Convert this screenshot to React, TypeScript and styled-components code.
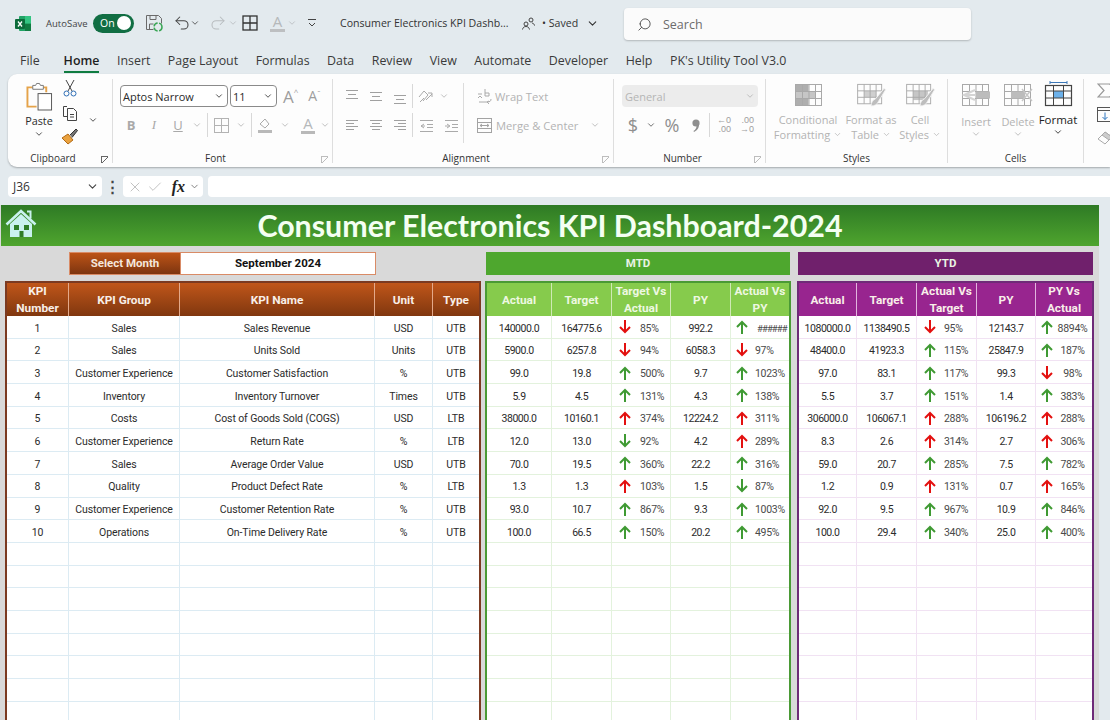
import styled, { createGlobalStyle } from "styled-components";
import { ChevronDown, Check, X, Search, Undo2, Redo2 } from "lucide-react";

type Dir = "ug" | "dr" | "ur" | "dg";
type Col = { w: number; title: string };

const kpiRows = [
  ["1", "Sales", "Sales Revenue", "USD", "UTB"],
  ["2", "Sales", "Units Sold", "Units", "UTB"],
  ["3", "Customer Experience", "Customer Satisfaction", "%", "UTB"],
  ["4", "Inventory", "Inventory Turnover", "Times", "UTB"],
  ["5", "Costs", "Cost of Goods Sold (COGS)", "USD", "LTB"],
  ["6", "Customer Experience", "Return Rate", "%", "LTB"],
  ["7", "Sales", "Average Order Value", "USD", "UTB"],
  ["8", "Quality", "Product Defect Rate", "%", "LTB"],
  ["9", "Customer Experience", "Customer Retention Rate", "%", "UTB"],
  ["10", "Operations", "On-Time Delivery Rate", "%", "UTB"],
];

const mtdRows: [string, string, Dir, string, string, Dir, string][] = [
  ["140000.0", "164775.6", "dr", "85%", "992.2", "ug", "######"],
  ["5900.0", "6257.8", "dr", "94%", "6058.3", "dr", "97%"],
  ["99.0", "19.8", "ug", "500%", "9.7", "ug", "1023%"],
  ["5.9", "4.5", "ug", "131%", "4.3", "ug", "138%"],
  ["38000.0", "10160.1", "ur", "374%", "12224.2", "ur", "311%"],
  ["12.0", "13.0", "dg", "92%", "4.2", "ur", "289%"],
  ["70.0", "19.5", "ug", "360%", "22.2", "ug", "316%"],
  ["1.3", "1.3", "ur", "103%", "1.5", "dg", "87%"],
  ["93.0", "10.7", "ug", "867%", "9.3", "ug", "1003%"],
  ["100.0", "66.5", "ug", "150%", "20.2", "ug", "495%"],
];

const ytdRows: [string, string, Dir, string, string, Dir, string][] = [
  ["1080000.0", "1138490.5", "dr", "95%", "12143.7", "ug", "8894%"],
  ["48400.0", "41923.3", "ug", "115%", "25847.9", "ug", "187%"],
  ["97.0", "83.1", "ug", "117%", "99.3", "dr", "98%"],
  ["5.5", "3.7", "ug", "151%", "1.4", "ug", "383%"],
  ["306000.0", "106067.1", "ur", "288%", "106196.2", "ur", "288%"],
  ["8.3", "2.6", "ur", "314%", "2.7", "ur", "306%"],
  ["59.0", "20.7", "ug", "285%", "7.5", "ug", "782%"],
  ["1.2", "0.9", "ur", "131%", "0.7", "ur", "165%"],
  ["92.0", "9.5", "ug", "967%", "10.9", "ug", "846%"],
  ["100.0", "29.4", "ug", "340%", "25.0", "ug", "400%"],
];

const kpiCols: Col[] = [
  { w: 62, title: "KPI Number" },
  { w: 111, title: "KPI Group" },
  { w: 195, title: "KPI Name" },
  { w: 58, title: "Unit" },
  { w: 46, title: "Type" },
];
const mtdCols: Col[] = [
  { w: 65, title: "Actual" },
  { w: 60, title: "Target" },
  { w: 59, title: "Target Vs Actual" },
  { w: 60, title: "PY" },
  { w: 58, title: "Actual Vs PY" },
];
const ytdCols: Col[] = [
  { w: 58, title: "Actual" },
  { w: 60, title: "Target" },
  { w: 60, title: "Actual Vs Target" },
  { w: 59, title: "PY" },
  { w: 56, title: "PY Vs Actual" },
];

const tabs = ["File", "Home", "Insert", "Page Layout", "Formulas", "Data", "Review", "View", "Automate", "Developer", "Help", "PK's Utility Tool V3.0"];
const TOTAL_ROWS = 18;

const template = (cols: Col[]) => cols.map((c) => `${c.w}px`).join(" ");

const Arrow = ({ dir }: { dir: Dir }) => {
  const color = dir === "ug" || dir === "dg" ? "#3f9a33" : "#e3100f";
  const up = dir === "ug" || dir === "ur";
  return (
    <ArrowSvg viewBox="0 0 12 14" fill="none" stroke={color} strokeWidth="2">
      {up ? <path d="M6 14V2M1 7l5-5 5 5" /> : <path d="M6 0v12M1 7l5 5 5-5" />}
    </ArrowSvg>
  );
};

const Chev = ({ size = 10, color = "#b5b5b5" }: { size?: number; color?: string }) => (
  <ChevronDown size={size} color={color} strokeWidth={2} />
);

// align glyph: rows of short lines
const LinesIcon = ({ rows, color = "#a0a0a0" }: { rows: [number, number, number][]; color?: string }) => (
  <svg width="16" height="16" viewBox="0 0 16 16" stroke={color} strokeWidth="1" fill="none">
    {rows.map(([x1, x2, y]) => (
      <line key={y} x1={x1} x2={x2} y1={y + 0.5} y2={y + 0.5} />
    ))}
  </svg>
);

const CellGrid = ({ stroke = "#a9a9a9" }: { stroke?: string }) => (
  <g stroke={stroke} fill="none" strokeWidth="1">
    <rect x="1.5" y="1.5" width="26" height="21" />
    <path d="M1.5 8.5h26M1.5 15.5h26M8.5 1.5v21M15 1.5v21M21.5 1.5v21" />
  </g>
);

const Brush = () => (
  <path d="M16 25c4 0 7-2 8-5l8-13-2-1-9 11c-3 1-5 4-5 8z" fill="#bdbdbd" stroke="#f4f4f4" strokeWidth="1" />
);

const PctText = ({ value }: { value: string }) =>
  value.startsWith("#") ? <Hash>{value}</Hash> : <span>{value}</span>;

const App = () => (
  <>
    <GlobalStyle />
    <Page>
      <TitleBar>
        <svg width="16" height="15" viewBox="0 0 16 15">
          <rect x="4" y="0" width="12" height="15" rx="1" fill="#21a366" />
          <rect x="10" y="7.5" width="6" height="7.5" fill="#107c41" />
          <rect x="10" y="0" width="6" height="7.5" fill="#33c481" />
          <rect x="0" y="3" width="10" height="10" rx="1" fill="#0c6b3a" />
          <path d="M3 5.5l4 5M7 5.5l-4 5" stroke="#fff" strokeWidth="1.3" />
        </svg>
        <AutoSave>AutoSave</AutoSave>
        <Toggle>
          On
          <Knob />
        </Toggle>
        <svg width="18" height="18" viewBox="0 0 18 18" fill="none" stroke="#6a6a6a">
          <path d="M1.5 1.5h12l3 3v5M1.5 1.5v14h7" />
          <path d="M5 1.5v4h6v-4M4.5 15v-5h4" />
          <circle cx="13" cy="13" r="4" stroke="#3aa655" strokeWidth="1.5" strokeDasharray="5 1.5" />
        </svg>
        <QuickSlot $left={10}>
          <Undo2 size={18} color="#444" strokeWidth={1.4} />
        </QuickSlot>
        <QuickSlot $left={-1}>
          <Chev size={10} color="#444" />
        </QuickSlot>
        <QuickSlot $left={9}>
          <Redo2 size={18} color="#b8bcbf" strokeWidth={1.4} />
        </QuickSlot>
        <QuickSlot $left={1}>
          <Chev size={10} color="#b8bcbf" />
        </QuickSlot>
        <QuickSlot $left={4}>
          <svg width="16" height="16" viewBox="0 0 16 16" fill="none" stroke="#333" strokeWidth="1.3">
            <rect x="1" y="1" width="14" height="14" />
            <path d="M8 1v14M1 8h14" />
          </svg>
        </QuickSlot>
        <DimA $left={12} $bar="#bdbfc1">A</DimA>
        <QuickSlot $left={2}>
          <Chev size={10} color="#b8bcbf" />
        </QuickSlot>
        <QuickSlot $left={10}>
          <svg width="10" height="10" viewBox="0 0 10 10" fill="none" stroke="#444">
            <path d="M1 1.5h8M2 5l3 3 3-3" />
          </svg>
        </QuickSlot>
        <DocTitle>Consumer Electronics KPI Dashb...</DocTitle>
        <svg width="13" height="13" viewBox="0 0 13 13" fill="none" stroke="#444">
          <circle cx="4" cy="7" r="2" />
          <path d="M.5 12.5c.4-2 1.6-3 3.5-3s3 1 3.5 3" />
          <circle cx="9" cy="3" r="2" />
          <path d="M10 6c1.4.3 2.3 1.2 2.6 2.6" />
        </svg>
        <Saved>• Saved</Saved>
        <Chev size={13} color="#333" />
        <SearchBox>
          <FlipIcon>
            <Search size={15} color="#444" strokeWidth={1.4} />
          </FlipIcon>
          Search
        </SearchBox>
      </TitleBar>

      <TabBar>
        {tabs.map((t) => (
          <Tab key={t} $active={t === "Home"}>
            {t}
          </Tab>
        ))}
      </TabBar>

      <Ribbon>
        <Group $w={105}>
          <GroupBody>
            <PasteCol>
              <svg width="27" height="29" viewBox="0 0 28 29" fill="none">
                <path d="M18 5h3v5M11 25H1.5V5H7" stroke="#e5a34a" strokeWidth="2" />
                <path d="M7 7V3h3l1-2h3l1 2h3v4z" stroke="#777" fill="#fff" />
                <rect x="12.5" y="11.5" width="14" height="17" stroke="#555" fill="#fff" />
              </svg>
              <PasteText>Paste</PasteText>
              <Chev size={10} color="#333" />
            </PasteCol>
            <ClipTools>
              <svg width="14" height="17" viewBox="0 0 14 17" fill="none" stroke="#444">
                <path d="M3 0l6 11M11 0L5 11" />
                <circle cx="3.5" cy="13.5" r="2.5" stroke="#2f6fb5" />
                <circle cx="10.5" cy="13.5" r="2.5" stroke="#2f6fb5" />
              </svg>
              <svg width="16" height="17" viewBox="0 0 16 17" fill="none" stroke="#444">
                <path d="M5 2.5H1.5v10H5" />
                <path d="M5.5 4.5h6l3 3v9h-9zM8 10.5h4M8 13h4" />
              </svg>
              <svg width="17" height="17" viewBox="0 0 17 17">
                <path d="M1 10l6-4 5 6-5 4z" fill="#eaa23f" stroke="#b36a14" />
                <path d="M9 7l6-6 1.5 1.5-5.5 7" fill="#777" stroke="#333" />
              </svg>
            </ClipTools>
            <ClipChev>
              <Chev size={10} color="#333" />
            </ClipChev>
          </GroupBody>
          <GroupFoot>
            <GroupLabel>Clipboard</GroupLabel>
            <Launcher $dark />
          </GroupFoot>
        </Group>

        <Group $w={220}>
          <StackBody $left={7}>
            <RibbonRow>
              <Combo $w={108}>
                Aptos Narrow
                <Chev size={10} color="#333" />
              </Combo>
              <Combo $w={47} $gap={2}>
                11
                <Chev size={10} color="#333" />
              </Combo>
              <GrowA $left={6} $size={17}>
                A<sup>^</sup>
              </GrowA>
              <GrowA $left={10} $size={14}>
                A<sup>ˇ</sup>
              </GrowA>
            </RibbonRow>
            <RibbonRow $top={7}>
              <Slot $w={22}>
                <DimLetter $weight={700}>B</DimLetter>
              </Slot>
              <Slot $w={24}>
                <DimLetter $italic>I</DimLetter>
              </Slot>
              <Slot $w={24}>
                <DimLetter $under>U</DimLetter>
              </Slot>
              <Slot $w={14}>
                <Chev />
              </Slot>
              <RowSep $left={3} />
              <Slot $w={26}>
                <svg width="15" height="15" viewBox="0 0 15 15" fill="none" stroke="#b3b3b3">
                  <rect x=".5" y=".5" width="14" height="14" />
                  <path d="M7.5 .5v14M.5 7.5h14" />
                </svg>
              </Slot>
              <Slot $w={14}>
                <Chev />
              </Slot>
              <RowSep $left={3} />
              <Slot $w={26}>
                <svg width="16" height="15" viewBox="0 0 16 15">
                  <path d="M3 6l5-5 4 5-4 4z" fill="none" stroke="#aaa" />
                  <rect x="1" y="12" width="14" height="3" fill="#b9b9b9" />
                </svg>
              </Slot>
              <Slot $w={14}>
                <Chev />
              </Slot>
              <DimA $left={9} $bar="#b9b9b9">A</DimA>
              <Slot $w={14} $left={3}>
                <Chev />
              </Slot>
            </RibbonRow>
          </StackBody>
          <GroupFoot>
            <GroupLabel>Font</GroupLabel>
            <Launcher />
          </GroupFoot>
        </Group>

        <Group $w={281}>
          <SplitBody>
            <StackBlock $left={7}>
              <RibbonRow>
                <Slot $w={24}>
                  <LinesIcon rows={[[2, 14, 2], [4, 12, 6], [2, 14, 10]]} />
                </Slot>
                <Slot $w={24}>
                  <LinesIcon rows={[[2, 14, 4], [4, 12, 8], [2, 14, 12]]} />
                </Slot>
                <Slot $w={24}>
                  <LinesIcon rows={[[2, 14, 7], [4, 12, 11], [2, 14, 15]]} />
                </Slot>
                <RowSep />
                <Slot $w={24}>
                  <svg width="17" height="15" viewBox="0 0 17 15" fill="none" stroke="#aaa">
                    <path d="M2 8l5-6 4 4-5 6M3 13l4-4M9 11l6-6M11 4h4v4" />
                  </svg>
                </Slot>
                <Slot $w={14}>
                  <Chev />
                </Slot>
              </RibbonRow>
              <RibbonRow $top={7}>
                <Slot $w={24}>
                  <LinesIcon rows={[[2, 14, 3], [2, 10, 6], [2, 14, 9], [2, 10, 12]]} />
                </Slot>
                <Slot $w={24}>
                  <LinesIcon rows={[[2, 14, 3], [4, 12, 6], [2, 14, 9], [4, 12, 12]]} />
                </Slot>
                <Slot $w={24}>
                  <LinesIcon rows={[[2, 14, 3], [6, 14, 6], [2, 14, 9], [6, 14, 12]]} />
                </Slot>
                <RowSep />
                <Slot $w={26}>
                  <svg width="15" height="15" viewBox="0 0 15 15" fill="none" stroke="#aaa">
                    <path d="M1 2.5h13M8 6.5h6M8 9.5h6M1 13.5h13M5 6L2 8l3 2M2 8h4" />
                  </svg>
                </Slot>
                <Slot $w={24}>
                  <svg width="15" height="15" viewBox="0 0 15 15" fill="none" stroke="#aaa">
                    <path d="M1 2.5h13M8 6.5h6M8 9.5h6M1 13.5h13M3 6l3 2-3 2M1 8h4" />
                  </svg>
                </Slot>
              </RibbonRow>
            </StackBlock>
            <LongSep />
            <StackBlock $left={13}>
              <RibbonRow>
                <svg width="16" height="16" viewBox="0 0 16 16" fill="none" stroke="#aaa">
                  <path d="M1 6h4M1 10l2-2 2 2M8 1v7M8 5h4v3H8M2 14h8c3 0 4-1 4-3M12 13l-2 1 2 2" />
                </svg>
                <DimText $left={2}>Wrap Text</DimText>
              </RibbonRow>
              <RibbonRow $top={7}>
                <svg width="15" height="15" viewBox="0 0 15 15" fill="none" stroke="#a3a3a3">
                  <rect x=".5" y=".5" width="14" height="14" />
                  <path d="M.5 4.5h14M.5 10.5h14M3 7.5h9M5 6L3 7.5 5 9M10 6l2 1.5L10 9" />
                </svg>
                <DimText $left={4}>Merge &amp; Center</DimText>
                <Slot $w={14} $left={10}>
                  <Chev />
                </Slot>
              </RibbonRow>
            </StackBlock>
          </SplitBody>
          <GroupFoot>
            <GroupLabel>Alignment</GroupLabel>
            <Launcher />
          </GroupFoot>
        </Group>

        <Group $w={152}>
          <StackBody $left={8}>
            <RibbonRow>
              <GeneralBox>
                General
                <Chev />
              </GeneralBox>
            </RibbonRow>
            <RibbonRow $top={7}>
              <Slot $w={22}>
                <NumberGlyph>$</NumberGlyph>
              </Slot>
              <Slot $w={14}>
                <Chev size={10} color="#555" />
              </Slot>
              <Slot $w={28}>
                <NumberGlyph>%</NumberGlyph>
              </Slot>
              <Slot $w={20}>
                <svg width="8" height="13" viewBox="0 0 8 13" fill="#8f8f8f">
                  <circle cx="4" cy="4" r="3.6" />
                  <path d="M7 4c.6 4-1.4 7.400-5 9l-.5-1c2-1.200 3-3 3-5z" />
                </svg>
              </Slot>
              <RowSep $left={3} />
              <Slot $w={24} $left={2}>
                <DecGlyph>
                  ←0
                  <br />
                  .00
                </DecGlyph>
              </Slot>
              <Slot $w={22}>
                <DecGlyph>
                  .00
                  <br />
                  →0
                </DecGlyph>
              </Slot>
            </RibbonRow>
          </StackBody>
          <GroupFoot>
            <GroupLabel>Number</GroupLabel>
            <Launcher />
          </GroupFoot>
        </Group>

        <Group $w={182}>
          <GroupBody>
            <LargeBtn $w={84}>
              <svg width="29" height="24" viewBox="0 0 29 24">
                <rect x="1.500" y="1.500" width="13" height="7" fill="#aeaeae" />
                <rect x="1.500" y="8.500" width="20" height="7" fill="#c6c6c6" />
                <rect x="1.500" y="15.500" width="13" height="7" fill="#aeaeae" />
                <CellGrid />
              </svg>
              <DimTwo>Conditional</DimTwo>
              <DimTwo>
                Formatting <Chev size={9} />
              </DimTwo>
            </LargeBtn>
            <LargeBtn $w={42}>
              <svg width="31" height="24" viewBox="0 0 33 26">
                <rect x="8.500" y="8.500" width="13" height="7" fill="#cfcfcf" />
                <CellGrid />
                <Brush />
              </svg>
              <DimTwo>Format as</DimTwo>
              <DimTwo>
                Table <Chev size={9} />
              </DimTwo>
            </LargeBtn>
            <LargeBtn $w={56}>
              <svg width="31" height="24" viewBox="0 0 33 26">
                <rect x="8.500" y="8.500" width="16" height="10" fill="#c6c6c6" />
                <CellGrid />
                <Brush />
              </svg>
              <DimTwo>Cell</DimTwo>
              <DimTwo>
                Styles <Chev size={9} />
              </DimTwo>
            </LargeBtn>
          </GroupBody>
          <GroupFoot>
            <GroupLabel>Styles</GroupLabel>
          </GroupFoot>
        </Group>

        <Group $w={136}>
          <GroupBody $left={7}>
            <LargeBtn $w={42}>
              <svg width="30" height="24" viewBox="0 0 30 24">
                <CellGrid />
                <rect x="15" y="8.500" width="14" height="7" fill="#bcbcbc" />
                <path d="M14 7L3 12l11 5M3 12h12" stroke="#d4d4d4" strokeWidth="2" fill="#fff" />
              </svg>
              <DimThree>Insert</DimThree>
              <Chev />
            </LargeBtn>
            <LargeBtn $w={42}>
              <svg width="30" height="24" viewBox="0 0 30 24">
                <CellGrid />
                <rect x="8" y="8.500" width="14" height="7" fill="#bcbcbc" />
                <path d="M19 6l10 12M29 6L19 18" stroke="#c6c6c6" strokeWidth="1.400" />
              </svg>
              <DimThree>Delete</DimThree>
              <Chev />
            </LargeBtn>
            <LargeBtn $w={38}>
              <FormatIconWrap>
                <svg width="29" height="26" viewBox="0 0 29 26">
                  <path d="M6 1.500h17M6 0v3M23 0v3" stroke="#3c78b8" fill="none" />
                  <rect x="9.500" y="10" width="10" height="7" fill="#6cb1ea" />
                  <g stroke="#444" fill="none">
                    <rect x="1.500" y="4.500" width="26" height="20" strokeWidth="1.200" />
                    <path d="M1.500 10h26M1.500 17h26M9.500 4.500v20M19.500 4.500v20" />
                  </g>
                </svg>
              </FormatIconWrap>
              <FormatText>Format</FormatText>
              <Chev size={10} color="#222" />
            </LargeBtn>
          </GroupBody>
          <GroupFoot>
            <GroupLabel>Cells</GroupLabel>
          </GroupFoot>
        </Group>

        <EditTools>
          <svg width="14" height="15" viewBox="0 0 14 15" fill="none" stroke="#999" strokeWidth="1.200">
            <path d="M13 2V1H1l6 6.500L1 14h12v-1" />
          </svg>
          <svg width="14" height="15" viewBox="0 0 14 15" fill="none">
            <rect x=".5" y=".5" width="17" height="14" stroke="#555" />
            <path d="M.5 3.500h17" stroke="#555" />
            <path d="M8 5.500v7M5.500 10L8 12.500 10.500 10" stroke="#2f77c0" />
          </svg>
          <svg width="14" height="15" viewBox="0 0 14 15" fill="none" stroke="#aaa">
            <path d="M1 9l7-7 7 5-7 7z" />
            <path d="M8 2l7 5-3 3-7-5z" fill="#ccc" />
          </svg>
        </EditTools>
      </Ribbon>

      <FormulaRow>
        <NameBox>
          J36
          <Chev size={13} color="#444" />
        </NameBox>
        <DotsCol>⋮</DotsCol>
        <FxBox>
          <X size={16} color="#b3b3b3" strokeWidth={1.2} />
          <Check size={16} color="#b3b3b3" strokeWidth={1.2} />
          <FxText>fx</FxText>
          <Chev size={11} color="#777" />
        </FxBox>
        <FormulaInput />
      </FormulaRow>

      <Sheet>
        <DashTitle>
          <HomeIcon>
            <svg width="32" height="29" viewBox="0 0 32 29">
              <path d="M1.500 15.500L16 2l14.500 13.500" fill="none" stroke="#c9f1ef" strokeWidth="2.600" />
              <path d="M22 2.500h3.500v7" fill="none" stroke="#c9f1ef" strokeWidth="2" />
              <path d="M5 15L16 5l11 10v13H5z" fill="#c9f1ef" />
              <rect x="9" y="16" width="5" height="5" fill="#2f7d28" />
              <rect x="19" y="16" width="5" height="5" fill="#2f7d28" />
              <rect x="14.500" y="22" width="4" height="6" fill="#2f7d28" />
            </svg>
          </HomeIcon>
          Consumer Electronics KPI Dashboard-2024
        </DashTitle>

        <Tables>
          <Column $w={476}>
            <ControlSlot $left={64}>
              <SelectLabel>Select Month</SelectLabel>
              <SelectValue>September 2024</SelectValue>
            </ControlSlot>
            <Panel $border="#7b3a21">
              <HeaderRow $cols={template(kpiCols)} $kind="kpi">
                {kpiCols.map((c) => (
                  <HeadCell key={c.title} $line="#e4a98a">
                    {c.title}
                  </HeadCell>
                ))}
              </HeaderRow>
              {Array.from({ length: TOTAL_ROWS }).map((_, i) => (
                <Row key={i} $cols={template(kpiCols)} $line="#dcebf3">
                  {kpiCols.map((c, j) => (
                    <Cell key={c.title} $line="#dcebf3">
                      {kpiRows[i]?.[j]}
                    </Cell>
                  ))}
                </Row>
              ))}
            </Panel>
          </Column>

          <Column $w={306} $left={4}>
            <ControlSlot>
              <Band $bg="#4ea72e" $w={304}>MTD</Band>
            </ControlSlot>
            <Panel $border="#4a9a35">
              <HeaderRow $cols={template(mtdCols)} $kind="mtd">
                {mtdCols.map((c) => (
                  <HeadCell key={c.title} $line="#cfe9b5">
                    {c.title}
                  </HeadCell>
                ))}
              </HeaderRow>
              {Array.from({ length: TOTAL_ROWS }).map((_, i) => {
                const r = mtdRows[i];
                return (
                  <Row key={i} $cols={template(mtdCols)} $line="#e3f2dd">
                    <NumCell $line="#e3f2dd">{r?.[0]}</NumCell>
                    <NumCell $line="#e3f2dd">{r?.[1]}</NumCell>
                    <ArrowCell $line="#e3f2dd" $left={7} $gap={9}>
                      {r && (
                        <>
                          <Arrow dir={r[2]} />
                          <PctText value={r[3]} />
                        </>
                      )}
                    </ArrowCell>
                    <NumCell $line="#e3f2dd">{r?.[4]}</NumCell>
                    <ArrowCell $line="#e3f2dd" $left={5} $gap={i === 0 ? 9 : 7}>
                      {r && (
                        <>
                          <Arrow dir={r[5]} />
                          <PctText value={r[6]} />
                        </>
                      )}
                    </ArrowCell>
                  </Row>
                );
              })}
            </Panel>
          </Column>

          <Column $w={297} $left={6}>
            <ControlSlot $left={1}>
              <Band $bg="#70206c" $w={295}>YTD</Band>
            </ControlSlot>
            <Panel $border="#6f2a78">
              <HeaderRow $cols={template(ytdCols)} $kind="ytd">
                {ytdCols.map((c) => (
                  <HeadCell key={c.title} $line="#e2b5de">
                    {c.title}
                  </HeadCell>
                ))}
              </HeaderRow>
              {Array.from({ length: TOTAL_ROWS }).map((_, i) => {
                const r = ytdRows[i];
                return (
                  <Row key={i} $cols={template(ytdCols)} $line="#f1e2f3">
                    <NumCell $line="#f1e2f3">{r?.[0]}</NumCell>
                    <NumCell $line="#f1e2f3">{r?.[1]}</NumCell>
                    <ArrowCell $line="#f1e2f3" $left={7} $gap={8}>
                      {r && (
                        <>
                          <Arrow dir={r[2]} />
                          <PctText value={r[3]} />
                        </>
                      )}
                    </ArrowCell>
                    <NumCell $line="#f1e2f3">{r?.[4]}</NumCell>
                    <ArrowCell $line="#f1e2f3" $left={5} $gap={0} $center>
                      {r && (
                        <>
                          <Arrow dir={r[5]} />
                          <PctText value={r[6]} />
                        </>
                      )}
                    </ArrowCell>
                  </Row>
                );
              })}
            </Panel>
          </Column>
        </Tables>
      </Sheet>
    </Page>
  </>
);

const GlobalStyle = createGlobalStyle`
  html, body {
    margin: 0;
    padding: 0;
    background: #e3eaee;
  }
  * {
    box-sizing: border-box;
  }
`;

const Page = styled.div`
  width: 1110px;
  height: 720px;
  overflow: hidden;
  background: #e3eaee;
  font-family: "Open Sans", "Noto Sans", sans-serif;
  color: #333;
`;

const TitleBar = styled.div`
  height: 47px;
  display: flex;
  align-items: center;
  padding: 0 0 1px 15px;
`;

const AutoSave = styled.span`
  font-size: 9.5px;
  width: 40px;
  margin: 0 7px 0 15px;
  color: #444;
  white-space: nowrap;
`;

const Toggle = styled.div`
  width: 41px;
  height: 19px;
  margin-right: 11px;
  padding: 0 3px 0 7px;
  border-radius: 10px;
  background: #116e43;
  color: #fff;
  font-size: 10.5px;
  display: flex;
  align-items: center;
  justify-content: space-between;
`;

const Knob = styled.span`
  width: 14px;
  height: 14px;
  border-radius: 50%;
  background: #fff;
`;

const QuickSlot = styled.span<{ $left: number }>`
  display: inline-flex;
  margin-left: ${(p) => p.$left}px;
`;

const DimA = styled.span<{ $left: number; $bar: string }>`
  display: inline-block;
  width: 15px;
  margin-left: ${(p) => p.$left}px;
  font-size: 15px;
  line-height: 15px;
  color: #b5b8ba;
  text-align: center;
  border-bottom: 3px solid ${(p) => p.$bar};
`;

const DocTitle = styled.span`
  font-size: 10.6px;
  width: 169px;
  margin: 0 13px 0 23px;
  color: #333;
  white-space: nowrap;
`;

const Saved = styled.span`
  font-size: 10.6px;
  width: 42px;
  margin: 0 2px 0 7px;
  color: #333;
  white-space: nowrap;
`;

const FlipIcon = styled.span`
  display: inline-flex;
  transform: scaleX(-1);
  margin-right: 11px;
`;

const SearchBox = styled.div`
  width: 347px;
  height: 32px;
  margin: 2px 0 0 25px;
  padding-left: 13px;
  display: flex;
  align-items: center;
  background: #fbfbfb;
  border-radius: 4px;
  box-shadow: 0 1px 2px rgba(0, 0, 0, 0.22);
  font-size: 12.5px;
  color: #6c6c6c;
`;

const TabBar = styled.div`
  height: 27px;
  display: flex;
  gap: 17.5px;
  padding-left: 20px;
  align-items: center;
`;

const Tab = styled.span<{ $active?: boolean }>`
  font-size: 12.4px;
  line-height: 20px;
  white-space: nowrap;
  color: ${(p) => (p.$active ? "#1e1e1e" : "#3a3a3a")};
  font-weight: ${(p) => (p.$active ? 600 : 400)};
  border-bottom: 2px solid ${(p) => (p.$active ? "#107c41" : "transparent")};
  margin-bottom: -2px;
  &:first-child {
    margin-right: 6.5px;
  }
`;

const Ribbon = styled.div`
  height: 93px;
  margin-left: 8px;
  padding-top: 5px;
  display: flex;
  align-items: flex-start;
  background: #fdfdfd;
  border-radius: 9px 0 0 9px;
  box-shadow: 0 1px 2px rgba(0, 0, 0, 0.28);
  overflow: hidden;
`;

const Group = styled.div<{ $w: number }>`
  width: ${(p) => p.$w}px;
  height: 84px;
  flex: none;
  display: flex;
  flex-direction: column;
  border-right: 1px solid #dedede;
`;

const GroupBody = styled.div<{ $left?: number }>`
  height: 71px;
  display: flex;
  align-items: flex-start;
  padding-left: ${(p) => p.$left ?? 0}px;
`;

const StackBody = styled.div<{ $left: number }>`
  height: 71px;
  padding: 6px 0 0 ${(p) => p.$left}px;
`;

const SplitBody = styled.div`
  height: 71px;
  display: flex;
  align-items: flex-start;
`;

const StackBlock = styled.div<{ $left: number }>`
  padding: 6px 0 0 ${(p) => p.$left}px;
`;

const LongSep = styled.div`
  width: 1px;
  height: 60px;
  margin: 4px 0 0 0;
  background: #dcdcdc;
`;

const RibbonRow = styled.div<{ $top?: number }>`
  height: 22px;
  margin-top: ${(p) => p.$top ?? 0}px;
  display: flex;
  align-items: center;
`;

const Slot = styled.span<{ $w: number; $left?: number }>`
  width: ${(p) => p.$w}px;
  flex: none;
  margin-left: ${(p) => p.$left ?? 0}px;
  display: inline-flex;
  justify-content: center;
  align-items: center;
`;

const RowSep = styled.span<{ $left?: number }>`
  width: 1px;
  height: 24px;
  flex: none;
  margin-left: ${(p) => p.$left ?? 0}px;
  background: #d8d8d8;
`;

const Combo = styled.div<{ $w: number; $gap?: number }>`
  width: ${(p) => p.$w}px;
  height: 22px;
  margin-left: ${(p) => p.$gap ?? 0}px;
  padding: 0 3px 0 2px;
  display: flex;
  align-items: center;
  justify-content: space-between;
  border: 1px solid #8a8a8a;
  border-radius: 4px;
  font-size: 11px;
  color: #2a2a2a;
  background: #fff;
`;

const GeneralBox = styled.div`
  width: 136px;
  height: 22px;
  padding: 0 3px;
  display: flex;
  align-items: center;
  justify-content: space-between;
  border-radius: 4px;
  background: #ececec;
  font-size: 11px;
  color: #b5b5b5;
`;

const GrowA = styled.span<{ $left: number; $size: number }>`
  margin-left: ${(p) => p.$left}px;
  font-size: ${(p) => p.$size}px;
  color: #9d9d9d;
  line-height: 1;
  sup {
    font-size: 8px;
    vertical-align: top;
  }
`;

const DimLetter = styled.span<{ $weight?: number; $italic?: boolean; $under?: boolean }>`
  font-family: ${(p) => (p.$italic ? '"Liberation Serif", serif' : "inherit")};
  font-size: 13px;
  color: #a9a9a9;
  font-weight: ${(p) => p.$weight ?? 400};
  font-style: ${(p) => (p.$italic ? "italic" : "normal")};
  text-decoration: ${(p) => (p.$under ? "underline" : "none")};
`;

const DimText = styled.span<{ $left?: number }>`
  margin-left: ${(p) => p.$left ?? 0}px;
  font-size: 11.2px;
  color: #b3b3b3;
  white-space: nowrap;
`;

const NumberGlyph = styled.span`
  font-size: 18px;
  line-height: 1;
  color: #8f8f8f;
`;

const DecGlyph = styled.span`
  font-family: "Liberation Sans", sans-serif;
  font-size: 9px;
  line-height: 9px;
  text-align: right;
  color: #a0a0a0;
`;

const GroupFoot = styled.div`
  height: 13px;
  display: flex;
  align-items: center;
`;

const GroupLabel = styled.span`
  flex: 1;
  text-align: center;
  font-size: 10px;
  line-height: 13px;
  padding-top: 3px;
  color: #333;
`;

const Launcher = styled.span<{ $dark?: boolean }>`
  width: 7px;
  height: 7px;
  margin: 5px 4px 0 3px;
  border: 1px solid ${(p) => (p.$dark ? "#666" : "#bdbdbd")};
  border-width: 1px 0 0 1px;
  background: linear-gradient(135deg, transparent 45%, ${(p) => (p.$dark ? "#666" : "#bdbdbd")} 46%, ${(p) => (p.$dark ? "#666" : "#bdbdbd")} 56%, transparent 57%);
`;

const PasteCol = styled.div`
  width: 53px;
  padding: 3px 0 0 9px;
  display: flex;
  flex-direction: column;
  align-items: center;
`;

const PasteText = styled.span`
  font-size: 10.8px;
  line-height: 14px;
  margin: 3px 0 1px;
  color: #2c2c2c;
`;

const ClipTools = styled.div`
  height: 66px;
  display: flex;
  flex-direction: column;
  justify-content: space-between;
  align-items: center;
  padding-top: 1px;
`;

const ClipChev = styled.div`
  margin: 29px 0 0 10px;
`;

const LargeBtn = styled.div<{ $w: number }>`
  width: ${(p) => p.$w}px;
  padding-top: 4px;
  flex: none;
  display: flex;
  flex-direction: column;
  align-items: center;
  white-space: nowrap;
`;

const DimTwo = styled.span`
  font-size: 11px;
  line-height: 15px;
  color: #b3b3b3;
  &:first-of-type {
    margin-top: 5px;
  }
`;

const DimThree = styled.span`
  font-size: 11px;
  line-height: 15px;
  margin-top: 7px;
  color: #b3b3b3;
`;

const FormatIconWrap = styled.div`
  display: flex;
  margin-top: -2px;
`;

const FormatText = styled.span`
  font-size: 11.5px;
  line-height: 15px;
  margin-top: 5px;
  color: #222;
`;

const EditTools = styled.div`
  height: 66px;
  padding: 4px 0 0 13px;
  display: flex;
  flex-direction: column;
  justify-content: space-between;
`;

const FormulaRow = styled.div`
  height: 21px;
  margin: 9px 0 8px 8px;
  display: flex;
  align-items: stretch;
`;

const NameBox = styled.div`
  width: 94px;
  padding: 0 3px 0 5px;
  display: flex;
  align-items: center;
  justify-content: space-between;
  background: #fff;
  border-radius: 4px;
  font-size: 12px;
  color: #333;
`;

const DotsCol = styled.span`
  width: 21px;
  font-size: 15px;
  font-weight: 700;
  line-height: 21px;
  text-align: center;
  color: #444;
`;

const FxBox = styled.div`
  width: 80px;
  padding: 0 3px 0 4px;
  display: flex;
  align-items: center;
  justify-content: space-between;
  background: #fff;
  border-radius: 4px;
`;

const FxText = styled.span`
  font-family: "Liberation Serif", serif;
  font-style: italic;
  font-weight: 700;
  font-size: 16px;
  margin-left: 5px;
  color: #222;
`;

const FormulaInput = styled.div`
  flex: 1;
  margin-left: 5px;
  background: #fff;
  border-radius: 4px 0 0 4px;
`;

const Sheet = styled.div`
  width: 1099px;
  height: 515px;
  background: #d9d9d9;
`;

const DashTitle = styled.div`
  position: relative;
  height: 41px;
  margin-left: 1px;
  background: linear-gradient(#2e7a25, #4fa52e);
  color: #f4fff2;
  font-family: "Lato", sans-serif;
  font-weight: 700;
  font-size: 30.4px;
  line-height: 41px;
  text-align: center;
`;

const HomeIcon = styled.span`
  position: absolute;
  left: 4px;
  top: 4px;
  display: flex;
`;

const Tables = styled.div`
  display: flex;
  padding-left: 5px;
`;

const Column = styled.div<{ $w: number; $left?: number }>`
  width: ${(p) => p.$w}px;
  flex: none;
  margin-left: ${(p) => p.$left ?? 0}px;
`;

const ControlSlot = styled.div<{ $left?: number }>`
  height: 35px;
  padding: 6px 0 6px ${(p) => p.$left ?? 1}px;
  display: flex;
`;

const SelectLabel = styled.div`
  width: 111px;
  background: linear-gradient(#bc5317, #7d3510);
  border: 1px solid #d98b66;
  border-right: 0;
  color: #f5e7dc;
  font: 700 11.5px/21px Roboto, sans-serif;
  text-align: center;
`;

const SelectValue = styled.div`
  width: 196px;
  background: #fff;
  border: 1px solid #d98b66;
  color: #111;
  font: 700 11.5px/21px Roboto, sans-serif;
  text-align: center;
`;

const Band = styled.div<{ $bg: string; $w: number }>`
  width: ${(p) => p.$w}px;
  background: ${(p) => p.$bg};
  color: #e9f3e4;
  font: 700 11.5px/22px Roboto, sans-serif;
  text-align: center;
`;

const Panel = styled.div<{ $border: string }>`
  border: 2px solid ${(p) => p.$border};
  border-bottom: 0;
`;

const headerBg = {
  kpi: "linear-gradient(#c0561a, #80370f)",
  mtd: "#86cb4c",
  ytd: "#98258f",
};

const HeaderRow = styled.div<{ $cols: string; $kind: "kpi" | "mtd" | "ytd" }>`
  height: 33px;
  display: grid;
  grid-template-columns: ${(p) => p.$cols};
  background: ${(p) => headerBg[p.$kind]};
  color: ${(p) => (p.$kind === "mtd" ? "#eef8e2" : "#f8efe9")};
`;

const HeadCell = styled.div<{ $line: string }>`
  display: flex;
  align-items: center;
  justify-content: center;
  padding: 0 2px;
  text-align: center;
  font: 700 11.8px/17px Roboto, sans-serif;
  border-right: 1px solid ${(p) => p.$line};
  &:last-child {
    border-right: 0;
  }
`;

const Row = styled.div<{ $cols: string; $line: string }>`
  height: 22.7px;
  display: grid;
  grid-template-columns: ${(p) => p.$cols};
  background: #fff;
  border-bottom: 1px solid ${(p) => p.$line};
`;

const Cell = styled.div<{ $line: string }>`
  display: flex;
  align-items: center;
  justify-content: center;
  padding-top: 4px;
  font: 400 10.5px/1 Roboto, sans-serif;
  letter-spacing: -0.1px;
  color: #2b2b2b;
  white-space: nowrap;
  border-right: 1px solid ${(p) => p.$line};
  &:last-child {
    border-right: 0;
  }
`;

const NumCell = styled(Cell)`
  letter-spacing: -0.45px;
`;

const ArrowCell = styled(Cell)<{ $left: number; $gap: number; $center?: boolean }>`
  justify-content: flex-start;
  padding-left: ${(p) => p.$left}px;
  gap: ${(p) => p.$gap}px;
  letter-spacing: -0.3px;
  span {
    flex: ${(p) => (p.$center ? 1 : "none")};
    text-align: ${(p) => (p.$center ? "center" : "left")};
    color: #4a4a4a;
  }
`;

const Hash = styled.span`
  font-size: 9.5px;
  letter-spacing: -0.9px;
`;

const ArrowSvg = styled.svg`
  width: 12px;
  height: 14px;
  flex: none;
  margin-top: -3px;
`;

export default App;
